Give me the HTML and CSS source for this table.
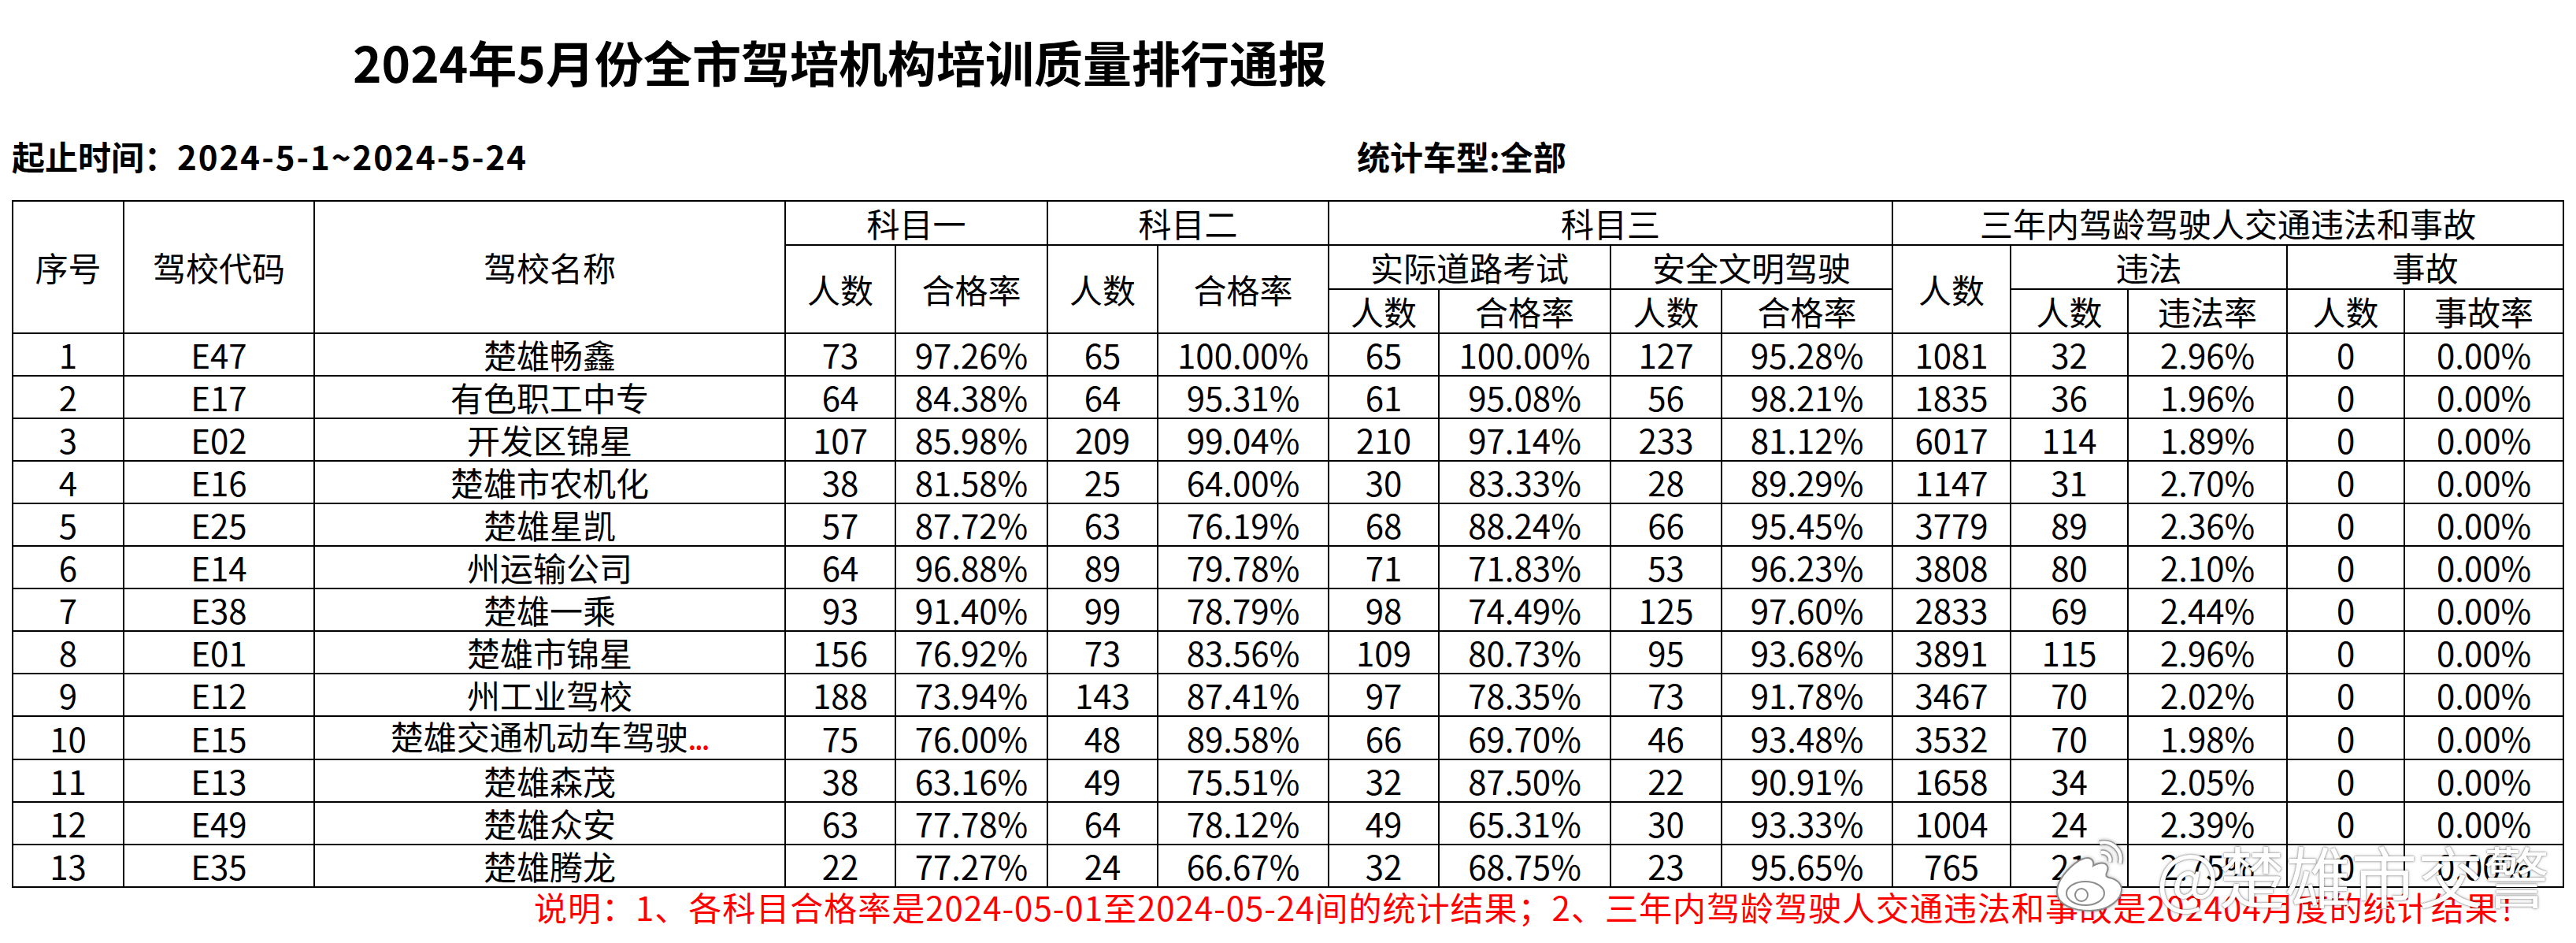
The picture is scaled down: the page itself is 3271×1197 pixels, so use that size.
FILE: index.html
```html
<!DOCTYPE html>
<html lang="zh-CN">
<head>
<meta charset="utf-8">
<title>2024年5月份全市驾培机构培训质量排行通报</title>
<link rel="stylesheet" href="styles.css">
</head>
<body>
<div class="page">
  <h1 class="title">2024年5月份全市驾培机构培训质量排行通报</h1>
  <div class="meta">
    <span class="range">起止时间：<span class="date">2024-5-1~2024-5-24</span></span>
    <span class="type">统计车型:全部</span>
  </div>
  <table class="report">
    <colgroup>
      <col class="w141"><col class="w242"><col class="w598">
      <col class="w140"><col class="w193">
      <col class="w140"><col class="w217">
      <col class="w140"><col class="w218"><col class="w141"><col class="w217">
      <col class="w150"><col class="w149"><col class="w202"><col class="w149"><col class="w202">
    </colgroup>
    <thead>
      <tr class="hr">
        <th rowspan="3">序号</th>
        <th rowspan="3">驾校代码</th>
        <th rowspan="3">驾校名称</th>
        <th colspan="2">科目一</th>
        <th colspan="2">科目二</th>
        <th colspan="4">科目三</th>
        <th colspan="5">三年内驾龄驾驶人交通违法和事故</th>
      </tr>
      <tr class="hr">
        <th rowspan="2">人数</th>
        <th rowspan="2">合格率</th>
        <th rowspan="2">人数</th>
        <th rowspan="2">合格率</th>
        <th colspan="2">实际道路考试</th>
        <th colspan="2">安全文明驾驶</th>
        <th rowspan="2">人数</th>
        <th colspan="2">违法</th>
        <th colspan="2">事故</th>
      </tr>
      <tr class="hr">
        <th>人数</th><th>合格率</th>
        <th>人数</th><th>合格率</th>
        <th>人数</th><th>违法率</th>
        <th>人数</th><th>事故率</th>
      </tr>
    </thead>
    <tbody>
      <tr><td>1</td><td>E47</td><td>楚雄畅鑫</td><td>73</td><td>97.26%</td><td>65</td><td>100.00%</td><td>65</td><td>100.00%</td><td>127</td><td>95.28%</td><td>1081</td><td>32</td><td>2.96%</td><td>0</td><td>0.00%</td></tr>
      <tr><td>2</td><td>E17</td><td>有色职工中专</td><td>64</td><td>84.38%</td><td>64</td><td>95.31%</td><td>61</td><td>95.08%</td><td>56</td><td>98.21%</td><td>1835</td><td>36</td><td>1.96%</td><td>0</td><td>0.00%</td></tr>
      <tr><td>3</td><td>E02</td><td>开发区锦星</td><td>107</td><td>85.98%</td><td>209</td><td>99.04%</td><td>210</td><td>97.14%</td><td>233</td><td>81.12%</td><td>6017</td><td>114</td><td>1.89%</td><td>0</td><td>0.00%</td></tr>
      <tr><td>4</td><td>E16</td><td>楚雄市农机化</td><td>38</td><td>81.58%</td><td>25</td><td>64.00%</td><td>30</td><td>83.33%</td><td>28</td><td>89.29%</td><td>1147</td><td>31</td><td>2.70%</td><td>0</td><td>0.00%</td></tr>
      <tr><td>5</td><td>E25</td><td>楚雄星凯</td><td>57</td><td>87.72%</td><td>63</td><td>76.19%</td><td>68</td><td>88.24%</td><td>66</td><td>95.45%</td><td>3779</td><td>89</td><td>2.36%</td><td>0</td><td>0.00%</td></tr>
      <tr><td>6</td><td>E14</td><td>州运输公司</td><td>64</td><td>96.88%</td><td>89</td><td>79.78%</td><td>71</td><td>71.83%</td><td>53</td><td>96.23%</td><td>3808</td><td>80</td><td>2.10%</td><td>0</td><td>0.00%</td></tr>
      <tr><td>7</td><td>E38</td><td>楚雄一乘</td><td>93</td><td>91.40%</td><td>99</td><td>78.79%</td><td>98</td><td>74.49%</td><td>125</td><td>97.60%</td><td>2833</td><td>69</td><td>2.44%</td><td>0</td><td>0.00%</td></tr>
      <tr><td>8</td><td>E01</td><td>楚雄市锦星</td><td>156</td><td>76.92%</td><td>73</td><td>83.56%</td><td>109</td><td>80.73%</td><td>95</td><td>93.68%</td><td>3891</td><td>115</td><td>2.96%</td><td>0</td><td>0.00%</td></tr>
      <tr><td>9</td><td>E12</td><td>州工业驾校</td><td>188</td><td>73.94%</td><td>143</td><td>87.41%</td><td>97</td><td>78.35%</td><td>73</td><td>91.78%</td><td>3467</td><td>70</td><td>2.02%</td><td>0</td><td>0.00%</td></tr>
      <tr><td>10</td><td>E15</td><td>楚雄交通机动车驾驶<span class="more">...</span></td><td>75</td><td>76.00%</td><td>48</td><td>89.58%</td><td>66</td><td>69.70%</td><td>46</td><td>93.48%</td><td>3532</td><td>70</td><td>1.98%</td><td>0</td><td>0.00%</td></tr>
      <tr><td>11</td><td>E13</td><td>楚雄森茂</td><td>38</td><td>63.16%</td><td>49</td><td>75.51%</td><td>32</td><td>87.50%</td><td>22</td><td>90.91%</td><td>1658</td><td>34</td><td>2.05%</td><td>0</td><td>0.00%</td></tr>
      <tr><td>12</td><td>E49</td><td>楚雄众安</td><td>63</td><td>77.78%</td><td>64</td><td>78.12%</td><td>49</td><td>65.31%</td><td>30</td><td>93.33%</td><td>1004</td><td>24</td><td>2.39%</td><td>0</td><td>0.00%</td></tr>
      <tr><td>13</td><td>E35</td><td>楚雄腾龙</td><td>22</td><td>77.27%</td><td>24</td><td>66.67%</td><td>32</td><td>68.75%</td><td>23</td><td>95.65%</td><td>765</td><td>21</td><td>2.75%</td><td>0</td><td>0.00%</td></tr>
    </tbody>
  </table>
  <p class="note">说明：1、各科目合格率是2024-05-01至2024-05-24间的统计结果；2、三年内驾龄驾驶人交通违法和事故是202404月度的统计结果！</p>
  <div class="watermark">
    <svg class="wb-logo" viewBox="0 0 90 96" width="90" height="96" aria-hidden="true">
      <g fill="#fff" stroke="#8c8c8c" stroke-width="2">
        <path d="M70 52c-3-1-5-2-3-6 4-8 0-14-10-12-4 1-7 3-7 3s1-5-2-8c-5-5-17 0-28 11C11 49 4 60 4 70c0 17 22 24 42 24 26 0 40-16 40-27 0-7-6-13-16-15z"/>
        <ellipse cx="40" cy="72" rx="24" ry="15"/>
        <circle cx="35" cy="74" r="8"/>
        <path d="M58 8c16-4 30 10 26 26" fill="none" stroke-width="7" stroke="#9c9c9c"/>
        <path d="M58 8c16-4 30 10 26 26" fill="none" stroke-width="4" stroke="#fff"/>
        <path d="M60 20c7-1 13 5 11 12" fill="none" stroke-width="7" stroke="#9c9c9c"/>
        <path d="M60 20c7-1 13 5 11 12" fill="none" stroke-width="4" stroke="#fff"/>
      </g>
    </svg>
    <span class="wb-text">@楚雄市交警</span>
  </div>
</div>
</body>
</html>
```

FILE: styles.css
```css
html, body {
  margin: 0;
  padding: 0;
  background: #ffffff;
}

body {
  font-family: "Noto Sans CJK SC", "Noto Sans", sans-serif;
  color: #000000;
}

.page {
  position: relative;
  width: 3271px;
  height: 1197px;
  overflow: hidden;
}

.title {
  margin: 47px 0 0 0;
  padding-left: 448px;
  font-size: 62px;
  line-height: 62px;
  font-weight: 700;
  white-space: nowrap;
}

.meta {
  display: flex;
  margin-top: 68px;
  padding-left: 15px;
  font-size: 42px;
  line-height: 42px;
  font-weight: 700;
  white-space: nowrap;
}

.meta .range {
  width: 1708px;
}

.meta .date {
  letter-spacing: 2px;
}

.report {
  margin: 35px 0 0 15px;
  border-collapse: collapse;
  table-layout: fixed;
  width: 3239px;
  font-size: 42px;
}

.report th,
.report td {
  border: 2px solid #000000;
  padding: 0;
  text-align: center;
  vertical-align: middle;
  font-weight: 400;
  white-space: nowrap;
  line-height: 48px;
}

.report tr.hr {
  height: 56px;
}

.report tbody tr {
  height: 54px;
}

.more {
  color: #ff0000;
  font-size: 30px;
  font-weight: 700;
  letter-spacing: -1px;
}

.w141 { width: 141px; }
.w242 { width: 242px; }
.w598 { width: 598px; }
.w140 { width: 140px; }
.w193 { width: 193px; }
.w217 { width: 217px; }
.w218 { width: 218px; }
.w150 { width: 150px; }
.w149 { width: 149px; }
.w202 { width: 202px; }

.note {
  margin: 3px 0 0 0;
  padding-left: 678px;
  font-size: 42px;
  line-height: 42px;
  letter-spacing: 1px;
  color: #ff0000;
  white-space: nowrap;
}

.watermark {
  position: absolute;
  left: 2608px;
  top: 1062px;
  display: flex;
  align-items: center;
  gap: 40px;
}

.wb-logo {
  display: block;
  filter: drop-shadow(0 0 2px rgba(0, 0, 0, 0.3));
}

.wb-text {
  font-size: 84px;
  line-height: 96px;
  font-weight: 400;
  color: #ffffff;
  white-space: nowrap;
  text-shadow: 0 0 2px rgba(0, 0, 0, 0.6), 0 0 4px rgba(0, 0, 0, 0.25);
}
```
